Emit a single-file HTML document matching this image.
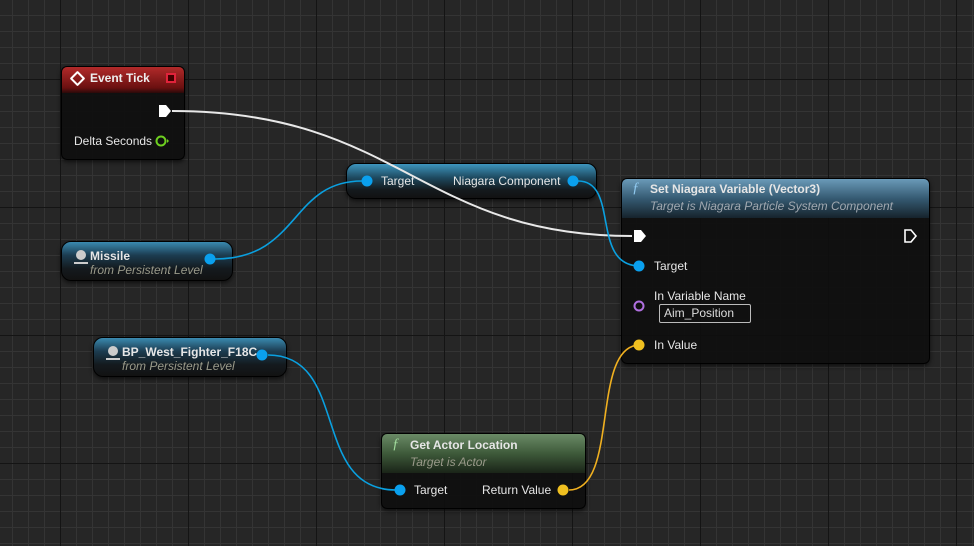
<!DOCTYPE html>
<html><head><meta charset="utf-8"><style>
*{margin:0;padding:0;box-sizing:border-box}
body{width:974px;height:546px;overflow:hidden;background:#262626;font-family:"Liberation Sans",sans-serif;position:relative;
background-image:
linear-gradient(90deg,#141414 1px,transparent 1px),
linear-gradient(0deg,#141414 1px,transparent 1px),
linear-gradient(90deg,#343434 1px,transparent 1px),
linear-gradient(0deg,#343434 1px,transparent 1px);
background-size:128px 128px,128px 128px,16px 16px,16px 16px;
background-position:60px 0,0 80px,12px 0,0 0;}
.n{position:absolute;background:rgba(14,14,14,.92);border:1px solid #000;border-radius:6px;box-shadow:0 2px 4px rgba(0,0,0,.6);color:#ddd;font-size:12px}
.t{position:absolute;white-space:nowrap;color:#e6e6e6;font-size:12px}
.b{font-weight:bold}
.i{font-style:italic;color:#9a9a8a;font-size:12px}
.pin{position:absolute;width:10px;height:10px;border-radius:50%}
svg{position:absolute;left:0;top:0}
</style></head><body>

<!-- Event Tick -->
<div class="n" style="left:61px;top:66px;width:124px;height:94px;">
 <div style="height:26px;border-radius:5px 5px 0 0;background:linear-gradient(180deg,#b22a2a,#6a1010 80%,#2a0a0a);"></div>
</div>
<div class="t b" style="left:90px;top:71px;color:#eee">Event Tick</div>
<div style="position:absolute;left:72px;top:73px;width:11px;height:11px;border:2px solid #fff;transform:rotate(45deg);border-radius:1px"></div>
<div style="position:absolute;left:166px;top:73px;width:10px;height:10px;border:2px solid #e0233b;background:#400"></div>
<div class="t" style="left:74px;top:134px">Delta Seconds</div>

<!-- Missile -->
<div class="n" style="left:61px;top:241px;width:172px;height:40px;border-radius:10px;background:linear-gradient(180deg,#3a8ab0 0%,#1c3c50 35%,#141a1e 70%,#121212);"></div>
<div class="t b" style="left:90px;top:249px">Missile</div>
<div class="t i" style="left:90px;top:263px">from Persistent Level</div>

<!-- BP_West -->
<div class="n" style="left:93px;top:337px;width:194px;height:40px;border-radius:10px;background:linear-gradient(180deg,#3a8ab0 0%,#1c3c50 35%,#141a1e 70%,#121212);"></div>
<div class="t b" style="left:122px;top:345px">BP_West_Fighter_F18C</div>
<div class="t i" style="left:122px;top:359px">from Persistent Level</div>

<!-- Niagara getter -->
<div class="n" style="left:346px;top:163px;width:251px;height:36px;border-radius:10px;background:linear-gradient(180deg,#3d95bd 0%,#1e4a60 40%,#141a1e 75%,#121212);"></div>
<div class="t" style="left:381px;top:174px">Target</div>
<div class="t" style="left:453px;top:174px">Niagara Component</div>

<!-- Set Niagara Variable -->
<div class="n" style="left:621px;top:178px;width:309px;height:186px;">
 <div style="height:39px;border-radius:5px 5px 0 0;background:linear-gradient(180deg,#6a9ab8,#355a72 50%,#16232c);"></div>
</div>
<div class="t" style="left:632px;top:180px;color:#8fc8ee;font-style:italic;font-family:'Liberation Serif',serif;font-size:15px">ƒ</div>
<div class="t b" style="left:650px;top:182px">Set Niagara Variable (Vector3)</div>
<div class="t i" style="left:650px;top:199px;color:#a0a8b0">Target is Niagara Particle System Component</div>
<div class="t" style="left:654px;top:259px">Target</div>
<div class="t" style="left:654px;top:289px">In Variable Name</div>
<div style="position:absolute;left:659px;top:304px;width:92px;height:19px;border:1px solid #bbb;border-radius:2px"></div>
<div class="t" style="left:664px;top:306px;color:#ddd">Aim_Position</div>
<div class="t" style="left:654px;top:338px">In Value</div>

<!-- Get Actor Location -->
<div class="n" style="left:381px;top:433px;width:205px;height:76px;">
 <div style="height:39px;border-radius:5px 5px 0 0;background:linear-gradient(180deg,#6a8a66,#3e5a3a 50%,#1a2418);"></div>
</div>
<div class="t" style="left:392px;top:436px;color:#9fd89a;font-style:italic;font-family:'Liberation Serif',serif;font-size:15px">ƒ</div>
<div class="t b" style="left:410px;top:438px">Get Actor Location</div>
<div class="t i" style="left:410px;top:455px">Target is Actor</div>
<div class="t" style="left:414px;top:483px">Target</div>
<div class="t" style="left:482px;top:483px">Return Value</div>

<svg width="974" height="546">
 <g fill="none" stroke-width="2">
  <path d="M172 111 C400 111,420 236,632 236" stroke="#e8e8e8"/>
  <path d="M215 259 C300 259,290 181,362 181" stroke="#0aa0e0" stroke-width="1.6"/>
  <path d="M578 181 C620 181,590 266,640 266" stroke="#0aa0e0" stroke-width="1.6"/>
  <path d="M268 355 C350 355,310 490,396 490" stroke="#0aa0e0" stroke-width="1.6"/>
  <path d="M569 490 C620 490,590 345,640 345" stroke="#f0b020" stroke-width="1.6"/>
 </g>
 <!-- exec pins -->
 <path d="M159 105 h7 l5 6 l-5 6 h-7z" fill="#fff"/>
 <path d="M634 230 h7 l5 6 l-5 6 h-7z" fill="#fff"/>
 <path d="M905 230 h6 l5 6 l-5 6 h-6z" fill="none" stroke="#fff" stroke-width="1.6"/>
 <!-- data pins -->
 <circle cx="161" cy="141" r="4.5" fill="none" stroke="#6ed020" stroke-width="2"/><path d="M167 139 l2 2 l-2 2z" fill="#6ed020"/>
 <g fill="#0aa0ee">
  <circle cx="210" cy="259" r="5.5"/><circle cx="262" cy="355" r="5.5"/>
  <circle cx="367" cy="181" r="5.5"/><circle cx="573" cy="181" r="5.5"/>
  <circle cx="639" cy="266" r="5.5"/><circle cx="400" cy="490" r="5.5"/>
 </g>
 <circle cx="639" cy="306" r="4.5" fill="none" stroke="#b070e0" stroke-width="2"/>
 <g fill="#f0c020"><circle cx="639" cy="345" r="5.5"/><circle cx="563" cy="490" r="5.5"/></g>
 <!-- actor icons -->
 <g fill="#ccc"><circle cx="81" cy="255" r="5"/><rect x="74" y="262" width="14" height="2"/>
 <circle cx="113" cy="351" r="5"/><rect x="106" y="358" width="14" height="2"/></g>
</svg>
</body></html>
